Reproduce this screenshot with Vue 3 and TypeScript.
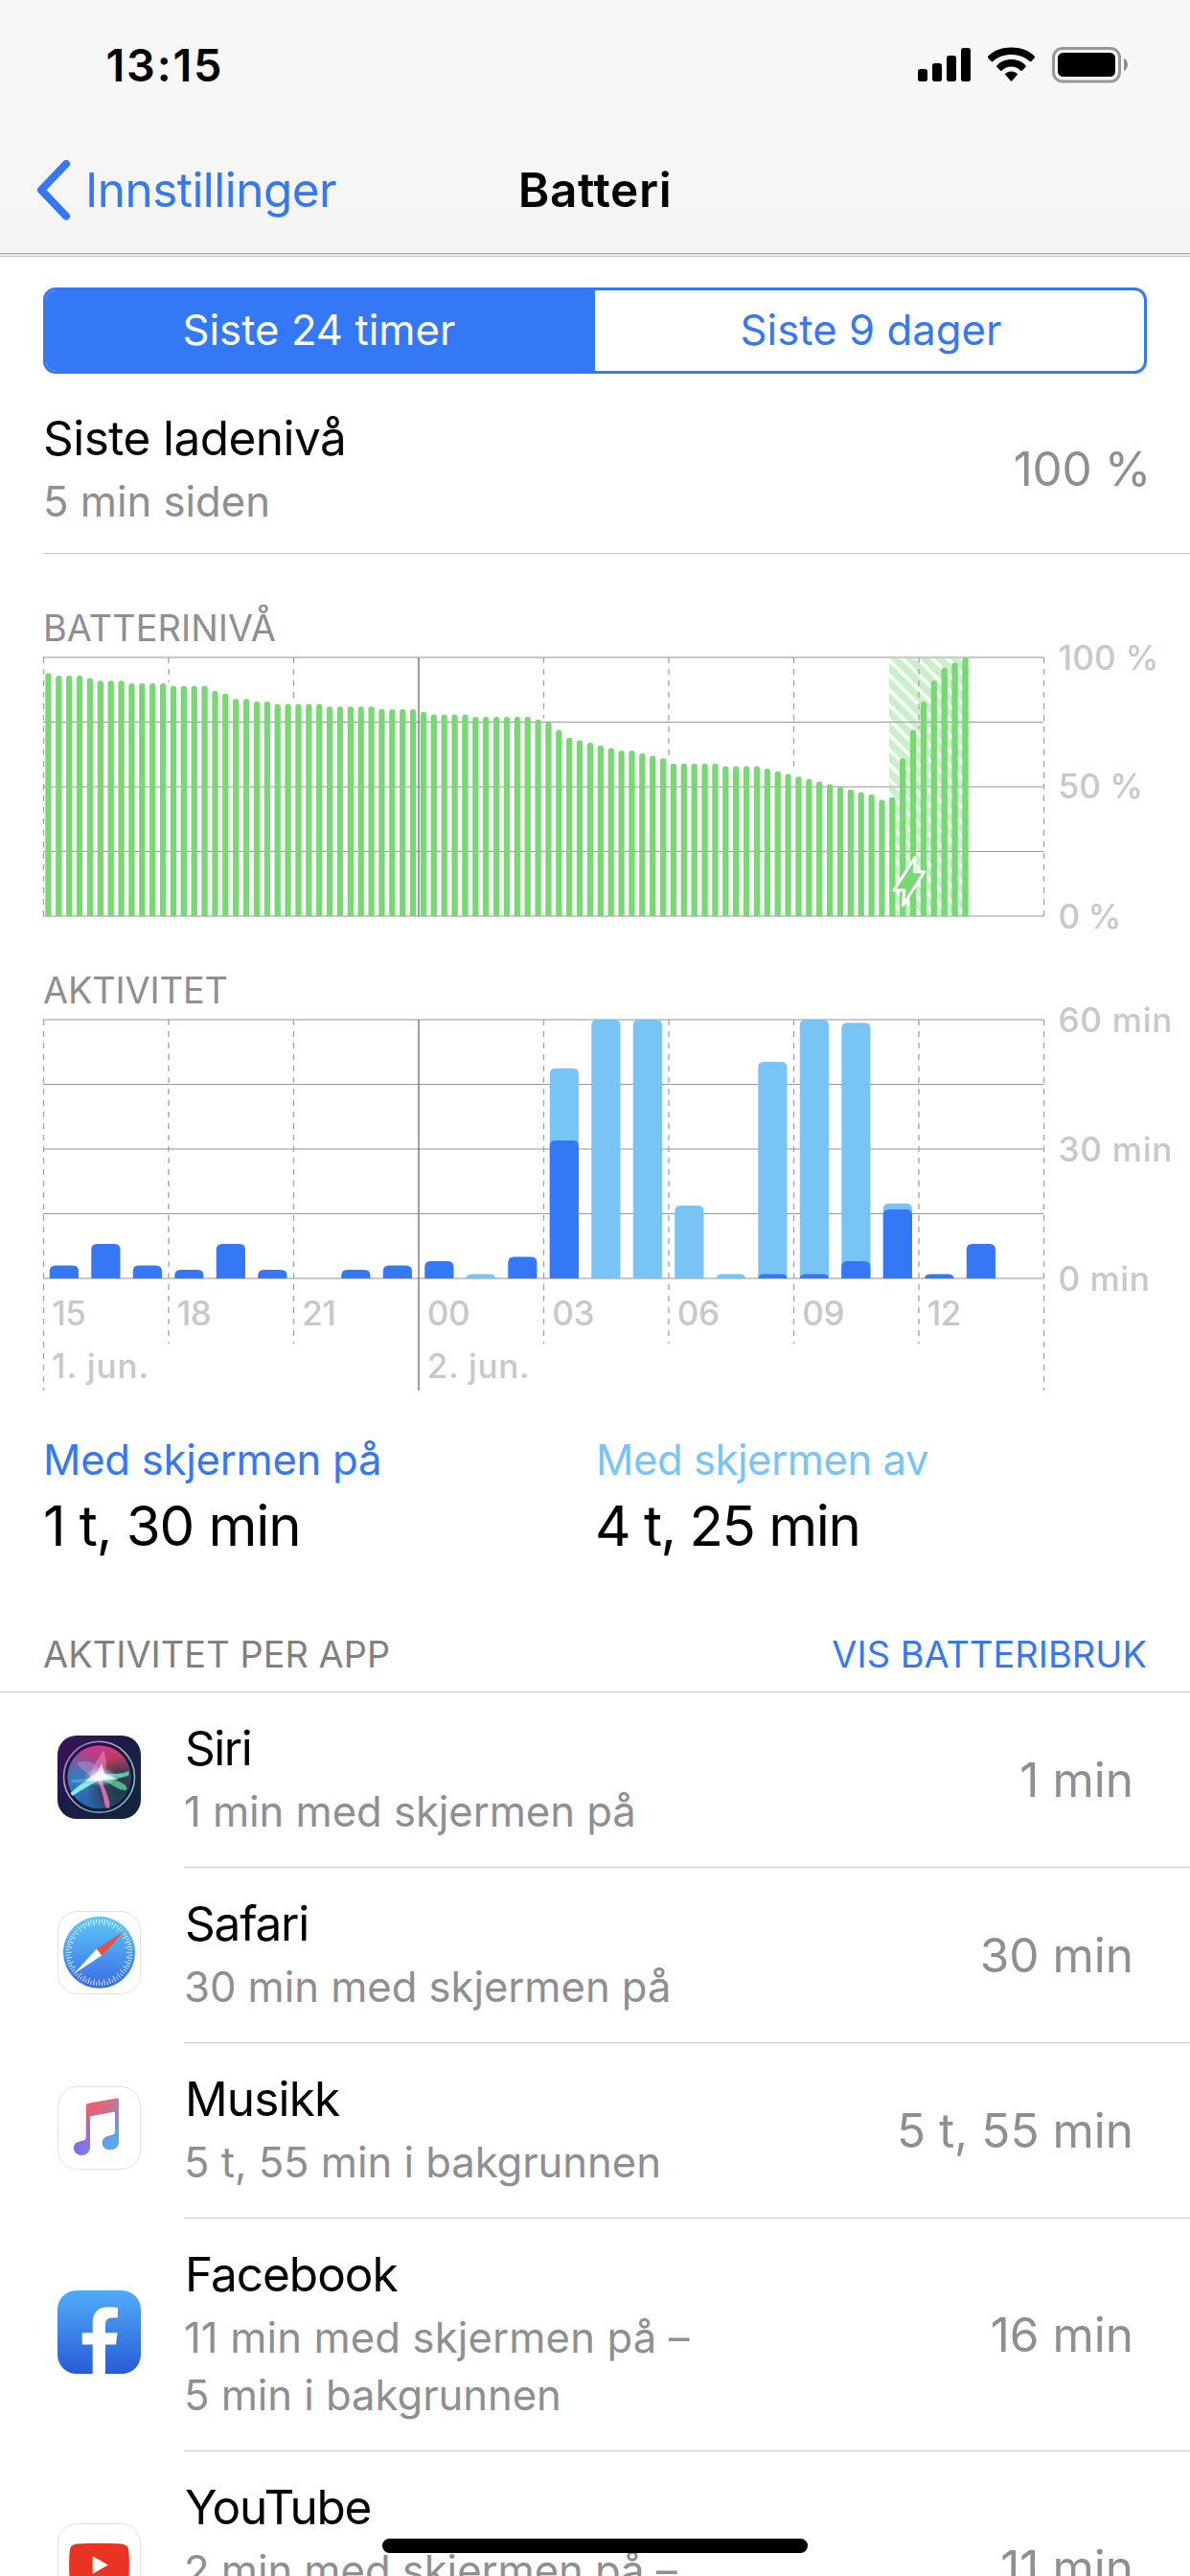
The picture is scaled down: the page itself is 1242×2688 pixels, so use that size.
<script setup lang="ts">
interface AppUsage {
  id: string
  name: string
  detail: string[]
  time: string
  tracking: number
}

const apps: AppUsage[] = [
  { id: 'siri', name: 'Siri', detail: ['1 min med skjermen på'], time: '1 min', tracking: -1.5 },
  { id: 'safari', name: 'Safari', detail: ['30 min med skjermen på'], time: '30 min', tracking: -1.2 },
  { id: 'music', name: 'Musikk', detail: ['5 t, 55 min i bakgrunnen'], time: '5 t, 55 min', tracking: -0.85 },
  { id: 'facebook', name: 'Facebook', detail: ['11 min med skjermen på –', '5 min i bakgrunnen'], time: '16 min', tracking: -1.02 },
  { id: 'youtube', name: 'YouTube', detail: ['2 min med skjermen på –', '9 min i bakgrunnen'], time: '11 min', tracking: -1.25 },
]

// Battery percentage per quarter hour
const levels: number[] = [
  94, 93, 93, 93, 92, 91, 91, 91, 90, 90, 90, 90, 89, 89, 89, 89, 87, 86, 84, 84, 83, 83,
  82, 82, 82, 82, 82, 81, 81, 81, 81, 81, 80, 80, 80, 80, 79, 78, 78, 78, 78,
  77, 77, 77, 77, 77, 77, 76, 75, 72, 69, 68, 67, 66, 65, 64, 64, 63, 62, 61,
  59, 59, 59, 59, 59, 58, 58, 58, 58, 57, 56, 55, 54, 53, 52, 51, 50, 49, 48, 47,
  45, 46, 61, 72, 83, 91, 96, 98, 100,
]

// Minutes per hour: [total, screen on]
const activity: [number, number][] = [
  [3, 3], [8, 8], [3, 3], [2, 2], [8, 8], [2, 2], [0, 0], [2, 2], [3, 3], [4, 4], [1, 0], [5, 5],
  [48.7, 32], [60, 0], [60, 0], [16.9, 0], [1, 0], [50.2, 1], [60, 1], [59.3, 4], [17.4, 16], [1, 1], [8, 8],
]

const LEFT = 45
const WIDTH = 1044
const HEIGHT = 270
const STEP = WIDTH / 8
const hours = ['15', '18', '21', '00', '03', '06', '09', '12']

function bar(x: number, w: number, h: number, r: number): string {
  const k = Math.min(r, h)
  const t = HEIGHT - h
  return `M${x} ${HEIGHT}V${t + k}Q${x} ${t} ${x + r} ${t}H${x + w - r}Q${x + w} ${t} ${x + w} ${t + k}V${HEIGHT}Z`
}

const levelBars = levels.map((v, i) => bar(LEFT + 2.3 + i * (WIDTH / 96), 6.3, (v * HEIGHT) / 100, 3))
const columns = activity
  .map(([total, on], i) => ({ x: LEFT + 6.75 + i * (WIDTH / 24), total: total * 4.5, on: on * 4.5 }))
  .filter((c) => c.total > 0)
const totalBars = columns.filter((c) => c.total > c.on).map((c) => bar(c.x, 30.2, c.total, 6))
const onBars = columns.filter((c) => c.on > 0).map((c) => bar(c.x, 30.2, c.on, 6))

const gridX = Array.from({ length: 9 }, (_, k) => LEFT + 0.5 + k * STEP)
const gridY = [0, 1, 2, 3, 4].map((k) => ({ y: k % 2 === 0 ? k * 67.5 : k * 67.5, major: k % 2 === 0 }))

function levelLineEnd(k: number): number {
  if (k === 0 || k === 3 || k === 8) return HEIGHT
  return HEIGHT - (levels[k * 12 - 1] ?? 0) * 2.7 - 1
}

function activityLineEnd(k: number): number {
  return k === 0 || k === 3 || k === 8 ? 387 : 338
}

const ticks = Array.from({ length: 72 }, (_, i) => ({ angle: i * 5, inner: i % 2 === 0 ? 28.5 : 31 }))
</script>

<template>
  <div class="screen">
    <header class="header">
      <div class="status">
        <span class="clock">13:15</span>
        <svg class="status-icons" width="250" height="66" viewBox="0 0 250 66">
          <rect x="18" y="38" width="10" height="13" rx="2.8" />
          <rect x="33" y="32" width="10" height="19" rx="2.8" />
          <rect x="48" y="24" width="10" height="27" rx="2.8" />
          <rect x="63" y="16" width="10" height="35" rx="2.8" />
          <path d="M91 26.2Q90.600 25.400 91.400 24.600C102 12.400 129 12.400 139.600 24.600Q140.400 25.400 139.800 26.200L136.400 30Q135.600 30.800 134.700 30C125 20.600 106 20.600 96.300 30Q95.400 30.800 94.600 30Z" />
          <path d="M99.900 35.200C107 25.600 124 25.600 131.100 35.200L126.800 39.700Q126.300 40.200 125.600 39.700C120 34 111 34 105.400 39.700Q104.700 40.200 104.200 39.700Z" />
          <path d="M108.900 43.600C112 39.300 119 39.300 122.100 43.600L116.100 50.600Q115.500 51.100 114.900 50.600Z" />
          <rect x="159.500" y="16.500" width="69" height="34.500" rx="9.500" fill="none" stroke="#979797" stroke-width="3" />
          <rect x="164" y="21" width="60" height="25" rx="5.500" />
          <path d="M233 27C238.200 29 238.200 37.800 233 40Z" fill="#8a8a8a" />
        </svg>
      </div>
      <nav class="nav">
        <div class="back">
          <svg width="40" height="66" viewBox="0 0 40 66"><path d="M34 6L8 33.300L34 60.600" fill="none" stroke="#3478f6" stroke-width="8" stroke-linecap="round" stroke-linejoin="round" /></svg>
          <span class="back-label">Innstillinger</span>
        </div>
        <h1 class="title">Batteri</h1>
        <span></span>
      </nav>
    </header>

    <main>
      <div class="segments">
        <div class="segment active">Siste 24 timer</div>
        <div class="segment">Siste 9 dager</div>
      </div>

      <section class="level">
        <div class="level-text">
          <div class="level-name">Siste ladenivå</div>
          <div class="level-sub">5 min siden</div>
        </div>
        <div class="level-value">100 %</div>
      </section>

      <h2 class="caption">BATTERINIVÅ</h2>
      <svg class="chart level-chart" width="1242" height="332" viewBox="0 -8 1242 332">
        <defs>
          <pattern id="hatch" width="11" height="11" patternUnits="userSpaceOnUse" patternTransform="translate(927.8 15.600) rotate(45)">
            <rect width="11" height="11" fill="#caf0c9" />
            <rect width="11" height="3.500" fill="#ffffff" />
          </pattern>
        </defs>
        <rect x="927.800" y="0" width="83.400" height="270" fill="url(#hatch)" />
        <line v-for="g in gridY" :key="g.y" x1="45" x2="1089.500" :y1="g.y" :y2="g.y" :stroke="g.major ? '#c9c9cb' : '#98989b'" :stroke-width="g.major ? 2 : 1" />
        <line v-for="(x, k) in gridX" :key="x" :x1="x" :x2="x" y1="0" :y2="levelLineEnd(k)" :stroke="k === 3 ? '#6b6b70' : '#a2a2a5'" stroke-width="1.300" :stroke-dasharray="k === 3 ? 'none' : '6 6'" />
        <path v-for="(d, i) in levelBars" :key="i" :d="d" fill="#78d873" />
        <path d="M955 208.500L933 243H944L942.300 258.800L964.800 223.800H954.200Z" fill="#78d873" stroke="#ffffff" stroke-width="3" stroke-linejoin="round" />
        <g class="axis">
          <text x="1104.500" y="12.700" letter-spacing=".25">100 %</text>
          <text x="1104.500" y="147.300" letter-spacing=".1">50 %</text>
          <text x="1104.500" y="282.600" letter-spacing="-.5">0 %</text>
        </g>
      </svg>

      <h2 class="caption">AKTIVITET</h2>
      <svg class="chart" width="1242" height="439" viewBox="0 -8 1242 439">
        <line v-for="g in gridY" :key="g.y" x1="45" x2="1089.500" :y1="g.y" :y2="g.y" :stroke="g.major ? '#c9c9cb' : '#98989b'" :stroke-width="g.major ? 2 : 1" />
        <line v-for="(x, k) in gridX" :key="x" :x1="x" :x2="x" y1="0" :y2="activityLineEnd(k)" :stroke="k === 3 ? '#6b6b70' : '#a2a2a5'" stroke-width="1.300" :stroke-dasharray="k === 3 ? 'none' : '6 6'" />
        <path v-for="(d, i) in totalBars" :key="'t' + i" :d="d" fill="#77c4f5" />
        <path v-for="(d, i) in onBars" :key="'o' + i" :d="d" fill="#3478f6" />
        <g class="axis">
          <text x="1104.500" y="12.500" letter-spacing=".8">60 min</text>
          <text x="1104.500" y="147.500" letter-spacing=".8">30 min</text>
          <text x="1104.500" y="282.500" letter-spacing=".6">0 min</text>
          <text v-for="(h, k) in hours" :key="h" :x="LEFT + 9.300 + k * STEP" y="318.700" letter-spacing="-.5">{{ h }}</text>
          <text x="54" y="373.700" letter-spacing=".9">1. jun.</text>
          <text x="445.800" y="373.700" letter-spacing=".7">2. jun.</text>
        </g>
      </svg>

      <section class="totals">
        <div class="total">
          <div class="total-label on">Med skjermen på</div>
          <div class="total-value">1 t, 30 min</div>
        </div>
        <div class="total">
          <div class="total-label off">Med skjermen av</div>
          <div class="total-value wide">4 t, 25 min</div>
        </div>
      </section>

      <div class="list-head">
        <span>AKTIVITET PER APP</span>
        <span class="link">VIS BATTERIBRUK</span>
      </div>

      <ul class="apps">
        <li v-for="app in apps" :key="app.id" class="app">
          <div class="icon">
            <svg v-if="app.id === 'siri'" width="87" height="87" viewBox="0 0 87 87">
              <defs>
                <linearGradient id="siriBg" x1="0" y1="0" x2="1" y2="1">
                  <stop offset="0" stop-color="#3d1260" /><stop offset=".45" stop-color="#1c1c48" /><stop offset="1" stop-color="#12253e" />
                </linearGradient>
                <linearGradient id="siriOrb" x1=".4" y1="0" x2=".45" y2="1">
                  <stop offset="0" stop-color="#cf3a8c" /><stop offset=".4" stop-color="#a0407e" /><stop offset=".6" stop-color="#3f64a8" /><stop offset="1" stop-color="#2468b4" />
                </linearGradient>
                <radialGradient id="siriRed" cx=".76" cy=".3" r=".36">
                  <stop offset="0" stop-color="#d03a50" /><stop offset="1" stop-color="#d03a50" stop-opacity="0" />
                </radialGradient>
                <radialGradient id="siriDark" cx=".85" cy=".72" r=".56">
                  <stop offset="0" stop-color="#1b3c44" /><stop offset=".55" stop-color="#2d3c56" stop-opacity=".85" /><stop offset="1" stop-color="#2d4256" stop-opacity="0" />
                </radialGradient>
                <radialGradient id="siriBlue" cx=".14" cy=".5" r=".42">
                  <stop offset="0" stop-color="#2d82c4" /><stop offset="1" stop-color="#2d82c4" stop-opacity="0" />
                </radialGradient>
                <linearGradient id="siriRing" x1="0" y1="0" x2="1" y2="1">
                  <stop offset="0" stop-color="#a05cc0" /><stop offset=".35" stop-color="#c79cc4" /><stop offset=".65" stop-color="#74c49a" /><stop offset="1" stop-color="#7cbcc8" />
                </linearGradient>
                <radialGradient id="siriGlow">
                  <stop offset="0" stop-color="#fff" /><stop offset=".35" stop-color="#e9f6ff" stop-opacity=".75" /><stop offset="1" stop-color="#bfe4ff" stop-opacity="0" />
                </radialGradient>
              </defs>
              <rect width="87" height="87" rx="20" fill="url(#siriBg)" />
              <circle cx="43.500" cy="43.300" r="37" fill="#18183c" fill-opacity=".6" stroke="url(#siriRing)" stroke-width="1.600" />
              <circle cx="43.500" cy="43.300" r="33" fill="url(#siriOrb)" />
              <circle cx="43.500" cy="43.300" r="33" fill="url(#siriRed)" />
              <circle cx="43.500" cy="43.300" r="33" fill="url(#siriBlue)" />
              <circle cx="43.500" cy="43.300" r="33" fill="url(#siriDark)" />
              <path d="M20 29C32 24 43 29 47 42L43 46C35 42 25 37 20 29Z" fill="#c8a8ec" fill-opacity=".4" />
              <path d="M48 15C42 24 36 34 33 45L45 47C53 38 52 26 48 15Z" fill="#eca0d8" fill-opacity=".45" />
              <path d="M42 42C52 38 66 42 74 37Q77 42 70 43C60 46 51 44 43 46Z" fill="#6fe0b4" fill-opacity=".85" />
              <path d="M43 42C54 45 66 47 71 52C75 58 70 58 65 56C58 53 51 47 43 45Z" fill="#58c88c" fill-opacity=".85" />
              <path d="M45 42C48 54 55 66 54.500 74C53 79 49 74 48.500 68C47 58 43 51 41 44Z" fill="#ef74b8" fill-opacity=".85" />
              <path d="M47 41C36 43 24 50 13.500 60L15.500 63C25 57 36 50 47 45Z" fill="#8ef0ec" fill-opacity=".95" />
              <path d="M12 47C25 44 35 45 44 42L44 46C33 50 22 51 12 47Z" fill="#68b8ec" fill-opacity=".5" />
              <ellipse cx="45" cy="43" rx="17" ry="10" fill="url(#siriGlow)" />
              <path d="M28 48L42 38L46 29L49 40L64 46L49 46L44 47Z" fill="#fff" fill-opacity=".75" />
            </svg>

            <svg v-else-if="app.id === 'safari'" width="87" height="87" viewBox="0 0 87 87">
              <defs>
                <linearGradient id="safariFace" x1="0" y1="0" x2="0" y2="1">
                  <stop offset="0" stop-color="#5dc8f8" /><stop offset=".5" stop-color="#4b9bee" /><stop offset="1" stop-color="#3b69e6" />
                </linearGradient>
              </defs>
              <rect x=".5" y=".5" width="86" height="86" rx="20" fill="#fff" stroke="#e2e2e2" />
              <circle cx="43.500" cy="43.300" r="37.500" fill="url(#safariFace)" />
              <line v-for="t in ticks" :key="t.angle" x1="43.500" x2="43.500" :y1="43.300 - 34.800" :y2="43.300 - t.inner" stroke="#fff" stroke-opacity=".9" stroke-width=".9" :transform="`rotate(${t.angle} 43.500 43.300)`" />
              <path d="M69.700 21L40.700 39.800L46.200 46.500Z" fill="#ea4e3d" />
              <path d="M16.700 66L40.700 39.800L46.200 46.500Z" fill="#fff" />
            </svg>

            <svg v-else-if="app.id === 'music'" width="87" height="87" viewBox="0 0 87 87">
              <defs>
                <linearGradient id="noteWarm" x1="0" y1="0" x2="0" y2="1">
                  <stop offset="0" stop-color="#f06464" /><stop offset=".3" stop-color="#e0607e" /><stop offset=".65" stop-color="#a45cd0" /><stop offset="1" stop-color="#8454f4" />
                </linearGradient>
                <linearGradient id="noteCool" gradientUnits="userSpaceOnUse" x1="36" y1="28" x2="62" y2="50">
                  <stop offset="0" stop-color="#58a8f0" stop-opacity="0" /><stop offset=".35" stop-color="#7c90dc" stop-opacity=".35" /><stop offset="1" stop-color="#58a8f0" />
                </linearGradient>
              </defs>
              <rect x=".5" y=".5" width="86" height="86" rx="20" fill="#fff" stroke="#e2e2e2" />
              <g v-for="fill in ['url(#noteWarm)', 'url(#noteCool)']" :key="fill" :fill="fill">
                <path d="M29.800 20.500Q29.800 18.200 32 17.700L62 12.500Q63.900 12.300 63.900 14.200V57.500C63.900 63 60 66.200 55 66.200C50 66.200 46.800 63 46.800 59C46.800 54.500 50 52.300 55 51.400C58.500 50.800 60 50.400 60 47V27.800Q60 26.600 58.800 26.800L35.200 31Q34 31.300 34 32.500V63C34 68.500 30 71.800 25.200 71.800C20.200 71.800 17 68.600 17 64.500C17 60 20.500 58 25 57.100C28.300 56.400 29.800 56 29.800 53Z" />
              </g>
            </svg>

            <svg v-else-if="app.id === 'facebook'" width="87" height="87" viewBox="0 0 87 87">
              <defs>
                <linearGradient id="fbBg" x1="0" y1="0" x2="0" y2="1">
                  <stop offset="0" stop-color="#50adf9" /><stop offset="1" stop-color="#285ad7" />
                </linearGradient>
              </defs>
              <rect width="87" height="87" rx="20" fill="url(#fbBg)" />
              <path d="M36.700 87V56.500H25.700V44.300H36.700V34.500C36.700 22.500 42.500 17.200 53.500 17.200Q59 17.200 62.900 18V28.400H57.500C52 28.400 50 31 50 35.800V44.300H62.500L61 56.500H50V87Z" fill="#fff" />
            </svg>

            <svg v-else width="87" height="87" viewBox="0 0 87 87">
              <rect x=".5" y=".5" width="86" height="86" rx="20" fill="#fff" stroke="#e2e2e2" />
              <path d="M20 21.500Q43.500 20 67 21.500Q73.500 22 74.300 28.500Q75.500 43.500 74.300 58.500Q73.500 65 67 65.500Q43.500 67 20 65.500Q13.500 65 12.700 58.500Q11.500 43.500 12.700 28.500Q13.500 22 20 21.500Z" fill="#e93323" />
              <path d="M36.700 34.200L52.900 43.500L36.700 52.800Z" fill="#fff" />
            </svg>
          </div>
          <div class="body">
            <div class="texts">
              <div class="name" :style="{ letterSpacing: app.tracking + 'px' }">{{ app.name }}</div>
              <div class="detail">
                <div v-for="line in app.detail" :key="line" :class="{ ones: line.startsWith('11') }">{{ line }}</div>
              </div>
            </div>
            <div class="time">{{ app.time }}</div>
          </div>
        </li>
      </ul>
    </main>
    <div class="home-bar"></div>
  </div>
</template>

<style>
body {
  margin: 0;
  background: #fff;
}
</style>

<style scoped>
.screen {
  position: relative;
  width: 1242px;
  height: 2688px;
  overflow: hidden;
  background: #fff;
  color: #000;
  font-family: Inter, "Liberation Sans", sans-serif;
  font-size: 49.5px;
  line-height: 60px;
}
.header {
  box-sizing: border-box;
  height: 268px;
  border-bottom: 1px solid #c6c6ca;
  background: linear-gradient(#f8f8f8, #f7f7f7 50%, #f4f4f5);
  box-shadow: inset 0 -2px 0 #eaeaee, inset 0 -3px 0 #a7a7aa;
}
.status {
  display: flex;
  align-items: center;
  justify-content: space-between;
  height: 134px;
  padding: 0 52px 0 110.5px;
}
.clock {
  padding-top: 2px;
  font-size: 46.8px;
  font-weight: 600;
  letter-spacing: 1.8px;
}
.nav {
  display: grid;
  grid-template-columns: 1fr auto 1fr;
  align-items: center;
  height: 128px;
}
.back {
  display: flex;
  align-items: center;
  gap: 14px;
  padding-left: 35px;
  color: #3478f6;
}
.back-label {
  letter-spacing: -0.54px;
}
.title {
  margin: 0;
  font-size: 49.5px;
  font-weight: 600;
  letter-spacing: 0.6px;
}
.segments {
  display: flex;
  box-sizing: border-box;
  height: 90px;
  margin: 32px 45px 0;
  border: 3px solid #3478f6;
  border-radius: 13px;
  overflow: hidden;
}
.segment {
  flex: 1 1 0;
  box-sizing: border-box;
  padding-left: 3px;
  color: #3478f6;
  font-size: 43.6px;
  line-height: 84px;
  letter-spacing: 0.06px;
  text-align: center;
}
.segment.active {
  padding: 0 3px 0 0;
  background: #3478f6;
  color: #fff;
}
.level {
  display: flex;
  align-items: flex-start;
  justify-content: space-between;
  box-sizing: border-box;
  height: 188px;
  margin-left: 45px;
  padding: 37px 41px 0 0;
  border-bottom: 1px solid #c8c7cc;
}
.level-name {
  letter-spacing: -0.55px;
}
.level-sub {
  margin-top: 7px;
  color: #8e8e93;
  font-size: 43.6px;
}
.level-value {
  margin-top: 32px;
  color: #8e8e93;
  letter-spacing: -0.38px;
}
.caption {
  margin: 54px 0 0 45px;
  color: #8e8e93;
  font-size: 37.8px;
  font-weight: 400;
  line-height: 46px;
  letter-spacing: 0.1px;
}
.chart + .caption {
  margin-top: 0;
  letter-spacing: -0.1px;
}
.chart {
  display: block;
  overflow: visible;
}
.axis {
  fill: #c7c7cc;
  font-size: 35px;
  font-weight: 500;
}
.totals {
  display: flex;
  margin: 0 45px;
}
.total {
  flex: 1;
}
.total-label {
  padding-top: 1px;
  font-size: 43.6px;
  line-height: 56px;
  letter-spacing: -0.25px;
}
.on {
  color: #3478f6;
}
.off {
  padding-left: 1px;
  color: #77c4f5;
  letter-spacing: -0.45px;
}
.total-value {
  margin-top: 5px;
  font-size: 58.2px;
  line-height: 70px;
  letter-spacing: -1.1px;
}
.total-value.wide {
  letter-spacing: -1.5px;
}
.list-head {
  display: flex;
  justify-content: space-between;
  margin-top: 76px;
  padding: 0 45px 16px;
  border-bottom: 1px solid #c8c7cc;
  color: #808080;
  font-size: 37.8px;
  line-height: 46px;
  letter-spacing: 0.1px;
}
.link {
  color: #3478f6;
}
.apps {
  margin: 0;
  padding: 0;
  list-style: none;
}
.app {
  display: flex;
}
.icon {
  display: flex;
  align-items: center;
  width: 132px;
  padding: 0 0 6px 60px;
}
.body {
  display: flex;
  flex: 1;
  align-items: center;
  justify-content: space-between;
  padding: 28px 59px 28px 0;
  border-bottom: 1px solid #c8c7cc;
}
.name {
  padding-left: 1px;
}
.detail {
  margin: 7px 0 -1px;
  color: #8e8e93;
  font-size: 43.6px;
  letter-spacing: -0.04px;
}
.ones {
  letter-spacing: 0.14px;
}
.time {
  color: #8e8e93;
}
.home-bar {
  position: absolute;
  bottom: 24px;
  left: 399px;
  width: 444px;
  height: 15px;
  border-radius: 8px;
  background: #000;
}
</style>
